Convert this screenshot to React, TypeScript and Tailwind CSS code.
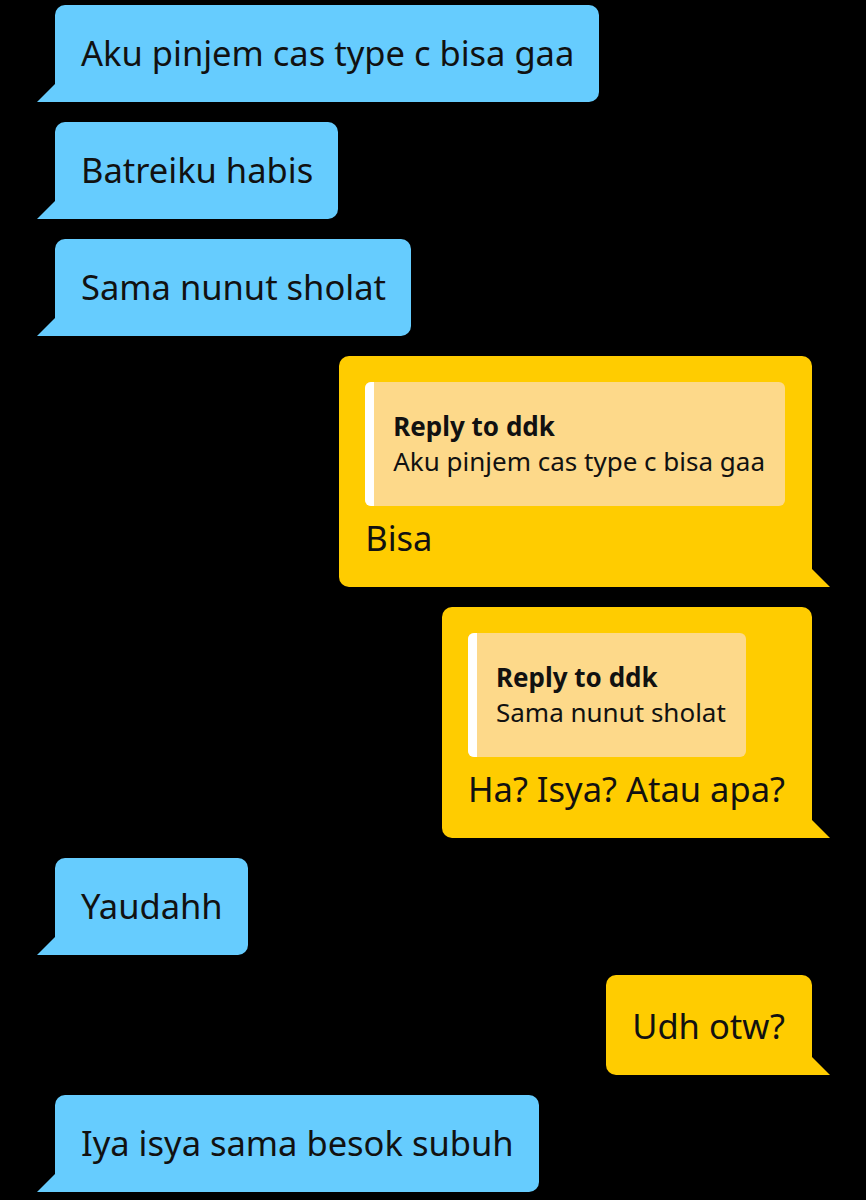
type Msg =
  | { side: 'left'; text: string }
  | { side: 'right'; text: string; reply?: string };

const messages: Msg[] = [
  { side: 'left', text: 'Aku pinjem cas type c bisa gaa' },
  { side: 'left', text: 'Batreiku habis' },
  { side: 'left', text: 'Sama nunut sholat' },
  { side: 'right', text: 'Bisa', reply: 'Aku pinjem cas type c bisa gaa' },
  { side: 'right', text: 'Ha? Isya? Atau apa?', reply: 'Sama nunut sholat' },
  { side: 'left', text: 'Yaudahh' },
  { side: 'right', text: 'Udh otw?' },
  { side: 'left', text: 'Iya isya sama besok subuh' },
];

function LeftBubble({ text }: { text: string }) {
  return (
    <div className="self-start ml-[55px] relative bg-[#66ccfe] rounded-[10px] rounded-bl-none pl-[26px] pr-[25px] pt-[23px] pb-[25px]">
      <span className="absolute left-[-18px] bottom-0 w-[18px] h-[18px] bg-[#66ccfe] [clip-path:polygon(100%_0,100%_100%,0_100%)]" />
      <p className="text-[34.5px] leading-[49px] text-[#111]">{text}</p>
    </div>
  );
}

function RightBubble({ text, reply }: { text: string; reply?: string }) {
  return (
    <div className="self-end mr-[54px] relative bg-[#ffcc00] rounded-[10px] rounded-br-none pl-[26px] pr-[27px] pt-[26px] pb-[25px]">
      <span className="absolute right-[-18px] bottom-0 w-[18px] h-[18px] bg-[#ffcc00] [clip-path:polygon(0_0,100%_100%,0_100%)]" />
      {reply && (
        <div className="flex mb-[7px] rounded-[6px] overflow-hidden bg-[#fdd98a] w-fit">
          <div className="w-[9px] bg-white shrink-0" />
          <div className="pl-[19px] pr-[20px] py-[27px] text-[26px] leading-[35px] text-[#111]">
            <p className="font-bold">Reply to ddk</p>
            <p>{reply}</p>
          </div>
        </div>
      )}
      <p className="text-[34.5px] leading-[49px] text-[#111]">{text}</p>
    </div>
  );
}

export default function App() {
  return (
    <div className="w-[866px] h-[1200px] bg-black overflow-hidden font-['Noto_Sans','Liberation_Sans',sans-serif]">
      <div className="flex flex-col gap-[20px] pt-[5px]">
        {messages.map((m, i) =>
          m.side === 'left' ? (
            <LeftBubble key={i} text={m.text} />
          ) : (
            <RightBubble key={i} text={m.text} reply={m.reply} />
          )
        )}
      </div>
    </div>
  );
}
